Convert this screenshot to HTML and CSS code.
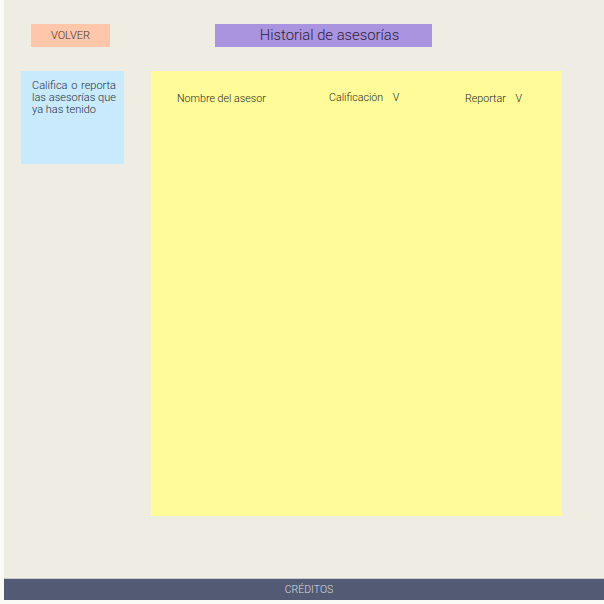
FILE: index.html
```html
<!DOCTYPE html>
<html lang="es">
<head>
<meta charset="utf-8">
<title>Historial de asesorías</title>
<link rel="stylesheet" href="styles.css">
</head>
<body>
<div class="page">
  <header class="topbar">
    <button class="back">VOLVER</button>
    <h1 class="title">Historial de asesorías</h1>
  </header>
  <main class="content">
    <aside class="note">Califica o reporta las asesorías que ya has tenido</aside>
    <section class="table">
      <div class="thead">
        <span class="col col-name">Nombre del asesor</span>
        <span class="col col-rate">Calificación <span class="caret">V</span></span>
        <span class="col col-report">Reportar <span class="caret">V</span></span>
      </div>
    </section>
  </main>
</div>
<footer class="footer">CRÉDITOS</footer>
</body>
</html>
```

FILE: styles.css
```css
html, body {
  margin: 0;
  padding: 0;
  background: #fafaf7;
  font-family: Roboto, "Liberation Sans", sans-serif;
  font-weight: 300;
}

.page {
  margin-left: 4px;
  height: 578px;
  background: #efede3;
  display: flex;
  flex-direction: column;
}

.topbar {
  display: flex;
  align-items: flex-start;
  padding-top: 24px;
  height: 23px;
}

.back {
  margin: 0 0 0 27px;
  width: 79px;
  height: 23px;
  border: none;
  padding: 0;
  background: #fec6aa;
  color: #4a3328;
  font-family: inherit;
  font-weight: 300;
  font-size: 11px;
}

.title {
  box-sizing: border-box;
  margin: 0 0 0 105px;
  padding-left: 12px;
  width: 217px;
  height: 23px;
  background: #aa93df;
  color: #2b2340;
  font-size: 14.8px;
  font-weight: 300;
  line-height: 23px;
  text-align: center;
}

.content {
  display: flex;
  align-items: flex-start;
  gap: 27px;
  margin-top: 24px;
  padding-left: 17px;
}

.note {
  box-sizing: border-box;
  width: 103px;
  height: 93px;
  background: #c9eafc;
  padding: 9px 8px 0 11px;
  color: #1f2f42;
  font-size: 11px;
  line-height: 12px;
  text-align: justify;
}

.table {
  width: 411px;
  height: 445px;
  background: #fffb99;
}

.thead {
  display: flex;
  padding-top: 20px;
  color: #2a2a1e;
  font-size: 10.7px;
}

.col-name {
  margin-left: 26px;
  width: 152px;
  padding-top: 1px;
}

.col-rate {
  width: 136px;
}

.col-report {
  padding-top: 1px;
}

.caret {
  margin-left: 7px;
}

.footer {
  margin-left: 4px;
  padding-left: 10px;
  height: 22px;
  background: #525b73;
  border-top: 1px solid #c8ccd0;
  box-sizing: border-box;
  color: #d8dbe4;
  font-size: 10.5px;
  line-height: 21px;
  text-align: center;
}
```
